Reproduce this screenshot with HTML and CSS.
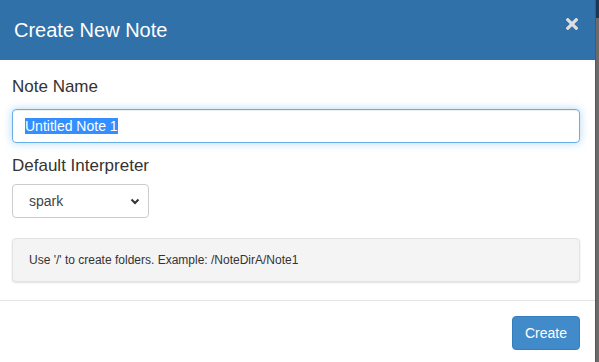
FILE: index.html
```html
<!DOCTYPE html>
<html lang="en">
    <head>
        <meta charset="utf-8"/>
        <title>Create New Note</title>
        <link rel="stylesheet" href="styles.css">
    </head>
    <body>
        <div class="page">
            <div class="modal">
                <!-- header -->
                <div class="modal-header">
                    <h4 class="modal-title">Create New Note</h4>
                    <span class="close"><svg width="12" height="12" viewBox="0 0 12 12"><path d="M1.8 1.8 L10.2 10.2 M10.2 1.8 L1.8 10.2" stroke="#dedede" stroke-width="3.2" stroke-linecap="square"/></svg></span>
                </div>

                <!-- body -->
                <div class="modal-body">
                    <label class="lbl">Note Name</label>
                    <div class="field field-focus"><span class="sel">Untitled Note 1</span></div>

                    <label class="lbl lbl-second">Default Interpreter</label>
                    <div class="field picker">
                        <span>spark</span>
                        <svg width="10" height="7" viewBox="0 0 10 7"><path d="M1.5 1.5 L5 5 L8.5 1.5" fill="none" stroke="#333" stroke-width="2"/></svg>
                    </div>

                    <div class="well">Use '/' to create folders. Example: /NoteDirA/Note1</div>
                </div>

                <!-- footer -->
                <div class="modal-footer">
                    <button class="btn">Create</button>
                </div>
            </div>
            <div class="backdrop"><div class="backdrop-top"></div></div>
        </div>
    </body>
</html>
```
FILE: styles.css
```css
html, body {
    margin: 0;
    padding: 0;
    background: #fff;
}

body {
    font-family: "Liberation Sans", Arial, sans-serif;
    color: #333;
}

.page {
    display: flex;
    height: 362px;
}

.modal {
    width: 595px;
    flex: none;
    background: #fff;
}

.backdrop {
    flex: 1;
    background: #6b6b6b;
    border-left: 1px solid #555;
}
.backdrop-top {
    height: 18px;
    background: #1c3753;
}

/* header */
.modal-header {
    background: #3071a9;
    height: 60px;
    padding: 0 17px 0 14px;
    display: flex;
    align-items: center;
    justify-content: space-between;
    box-sizing: border-box;
}
.modal-title {
    margin: 0;
    font-size: 20px;
    font-weight: normal;
    color: #fff;
    padding-top: 1px;
}
.close {
    display: flex;
    margin-top: -12px;
}

/* body */
.modal-body {
    padding: 15px 15px 18px 12px;
}
.lbl {
    display: block;
    font-size: 17px;
    line-height: 24px;
    margin-bottom: 10px;
}
.lbl-second {
    margin-top: 11px;
    margin-bottom: 6px;
}
.field {
    box-sizing: border-box;
    height: 34px;
    border: 1px solid #ccc;
    border-radius: 4px;
    font-size: 14px;
    display: flex;
    align-items: center;
    padding-left: 12px;
}
.field-focus {
    border-color: #66afe9;
    box-shadow: inset 0 1px 1px rgba(0,0,0,.075), 0 0 8px rgba(102,175,233,.5);
}
.sel {
    background: #338fff;
    color: #fff;
    line-height: 16px;
}
.picker {
    width: 137px;
    padding-left: 16px;
    padding-right: 8px;
    justify-content: space-between;
}
.picker span {
    color: #444;
}
.well {
    margin-top: 20px;
    height: 44px;
    box-sizing: border-box;
    background: #f4f4f4;
    border: 1px solid #e3e3e3;
    border-radius: 4px;
    box-shadow: 0 1px 2px rgba(0,0,0,.12);
    font-size: 12px;
    display: flex;
    align-items: center;
    padding-left: 16px;
}

/* footer */
.modal-footer {
    border-top: 1px solid #e5e5e5;
    padding: 15px 15px 0 0;
    display: flex;
    justify-content: flex-end;
}
.btn {
    font-family: "Liberation Sans", Arial, sans-serif;
    font-size: 14px;
    color: #fff;
    background: #428bca;
    border: 1px solid #357ebd;
    border-radius: 4px;
    height: 34px;
    padding: 0 12px;
}
```
